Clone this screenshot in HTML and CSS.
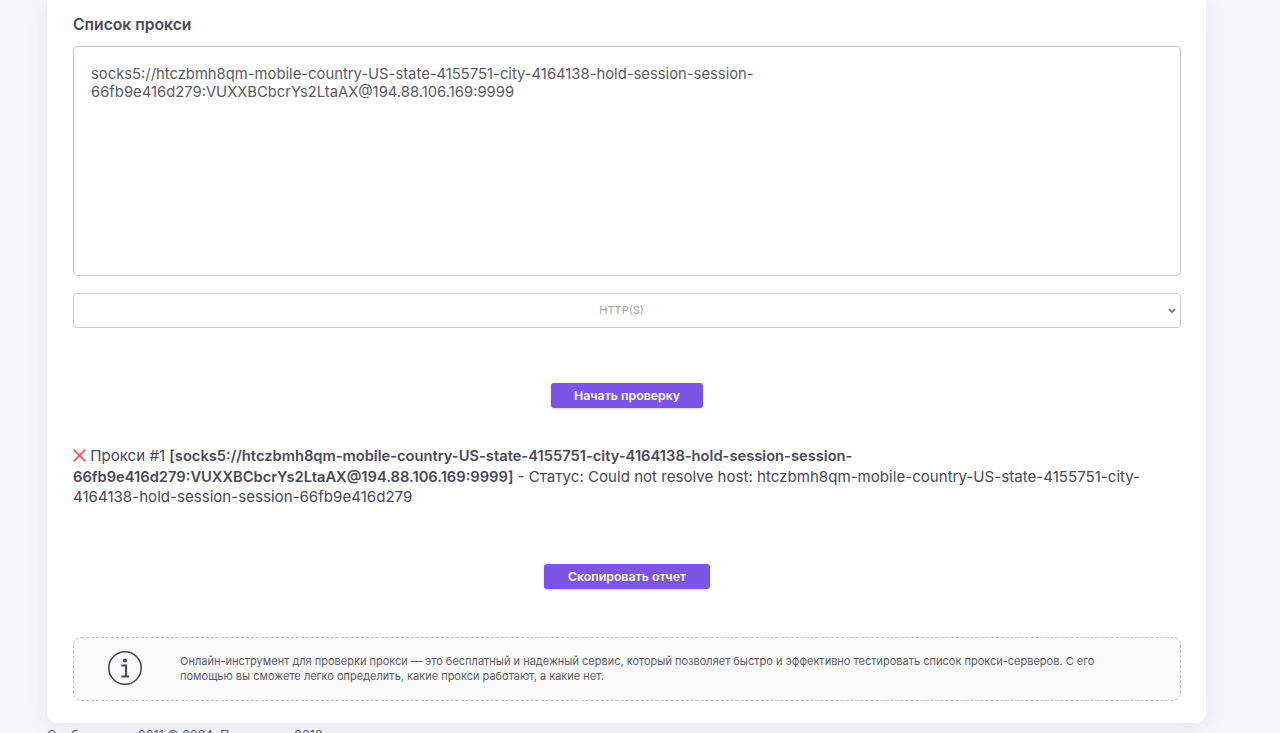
FILE: index.html
```html
<!DOCTYPE html>
<html lang="ru">
<head>
<meta charset="utf-8">
<title>Проверка прокси</title>
<link rel="stylesheet" href="styles.css">
</head>
<body>
<main class="card">
  <h2 class="title">Список прокси</h2>
  <textarea class="proxy-input" spellcheck="false">socks5://htczbmh8qm-mobile-country-US-state-4155751-city-4164138-hold-session-session-66fb9e416d279:VUXXBCbcrYs2LtaAX@194.88.106.169:9999</textarea>
  <select class="proxy-type"><option>HTTP(S)</option></select>
  <div class="action action-start"><button class="btn" type="button">Начать проверку</button></div>
  <p class="result"><svg class="cross" width="13" height="13" viewBox="0 0 13 13" aria-hidden="true"><path d="M.7.7 12.3 12.3M12.3.7 .7 12.3" fill="none" stroke="#f4505c" stroke-width="1.7"/></svg> Прокси #1 <b>[socks5://htczbmh8qm-mobile-country-US-state-4155751-city-4164138-hold-session-session-66fb9e416d279:VUXXBCbcrYs2LtaAX@194.88.106.169:9999]</b> - Статус: Could not resolve host: htczbmh8qm-mobile-country-US-state-4155751-city-4164138-hold-session-session-66fb9e416d279</p>
  <div class="action action-copy"><button class="btn" type="button">Скопировать отчет</button></div>
  <aside class="note">
    <svg class="note-icon" width="36" height="36" viewBox="0 0 36 36" aria-hidden="true"><circle cx="18" cy="18" r="16.2" fill="none" stroke="#4a4759" stroke-width="1.6"/><circle cx="18" cy="10.5" r="2" fill="#4a4759"/><path d="M14.5 15.5h4.6v10.5M14.5 26.5h7.5" fill="none" stroke="#4a4759" stroke-width="2"/></svg>
    <p class="note-text">Онлайн-инструмент для проверки прокси — это бесплатный и надежный сервис, который позволяет быстро и эффективно тестировать список прокси-серверов. С его помощью вы сможете легко определить, какие прокси работают, а какие нет.</p>
  </aside>
</main>
<footer class="footer">Сообщество с 2011 © 2024. Проверка с 2018</footer>
</body>
</html>
```
FILE: styles.css
```css
* { box-sizing: border-box; }
html, body { height: 100%; }
body {
  margin: 0;
  padding-left: 47px;
  overflow: hidden;
  background: #f5f6fa;
  color: #4b4858;
  font-family: Inter, "Open Sans", sans-serif;
}
.card {
  width: 1159px;
  height: 723px;
  padding: 16px 25px 22px 26px;
  background: #fff;
  border-radius: 0 0 10px 10px;
  box-shadow: 0 4px 24px rgba(70, 75, 110, 0.09);
}
.title {
  margin: 0;
  font-size: 15.7px;
  line-height: 18px;
  font-weight: 600;
}
.proxy-input {
  display: block;
  width: 100%;
  height: 230px;
  margin-top: 12px;
  padding: 18px 17px;
  border: 1px solid #c8c8c8;
  border-radius: 4px;
  resize: none;
  outline: none;
  color: #5d5a66;
  font: 400 14.8px/18px Inter, "Open Sans", sans-serif;
}
.proxy-type {
  display: block;
  width: 100%;
  height: 35px;
  margin-top: 17px;
  padding: 0 11px 1px 0;
  border: 1px solid #cfcfcf;
  border-radius: 4px;
  appearance: none;
  background: #fff url("data:image/svg+xml,%3Csvg xmlns='http://www.w3.org/2000/svg' width='8' height='6' viewBox='0 0 8 6'%3E%3Cpath d='M1 1.2 4 4.2 7 1.2' fill='none' stroke='%23777' stroke-width='1.7'/%3E%3C/svg%3E") no-repeat right 4px center;
  color: #a3a3a3;
  text-align: center;
  font: 400 11px Inter, "Open Sans", sans-serif;
}
.action { display: flex; justify-content: center; }
.action-start { margin-top: 55px; }
.action-copy { margin-top: 56.5px; }
.btn {
  height: 25px;
  padding: 0 23.5px;
  border: 0;
  border-radius: 3px;
  background: #7d55e6;
  color: #fff;
  font: 600 12.3px Inter, "Open Sans", sans-serif;
  box-shadow: 0 1px 2px rgba(125, 85, 230, 0.25);
}
.result {
  margin: 38px 0 0;
  font-size: 15.1px;
  line-height: 20.5px;
}
.result b { font-weight: 600; font-size: 14.7px; }
.cross { vertical-align: -1px; }
.note {
  display: flex;
  align-items: center;
  height: 64px;
  margin-top: 48px;
  padding: 0 40px 0 33px;
  border: 1px dashed #c4c4c4;
  border-radius: 8px;
  background: #fafafa;
}
.note-icon { flex: none; margin: 0 37px 3px 0; }
.note-text {
  margin: 0;
  font-size: 11px;
  line-height: 15px;
  color: #5c5a68;
}
.footer {
  margin-top: 6px;
  font-size: 12.5px;
  line-height: 14px;
  color: #5c5a68;
}
```
